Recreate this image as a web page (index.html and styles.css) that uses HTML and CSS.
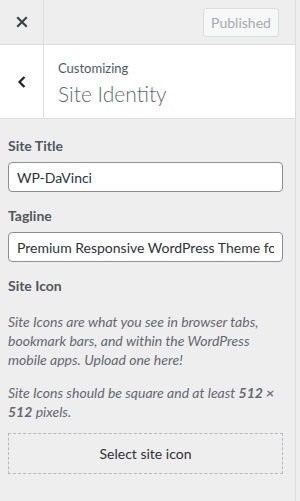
FILE: index.html
```html
<!DOCTYPE html>
<html lang="en">
<head>
  <meta charset="UTF-8">
  <title>Customizing: Site Identity</title>
  <link rel="stylesheet" href="styles.css">
</head>
<body>

  <div class="sidebar">
    <div class="topbar">
      <button class="close-btn" aria-label="Close">
        <svg width="12" height="12" viewBox="0 0 12 12"><path d="M2 2 L10 10 M10 2 L2 10" stroke="#3c434a" stroke-width="2.2" stroke-linecap="square"/></svg>
      </button>
      <button class="publish-btn" disabled>Published</button>
    </div>

    <div class="section-head">
      <button class="back-btn" aria-label="Back">
        <svg width="10" height="14" viewBox="0 0 10 14"><path d="M7.5 2 L2.5 7 L7.5 12" fill="none" stroke="#1d2327" stroke-width="2.2"/></svg>
      </button>
      <div class="section-title">
        <span class="crumb">Customizing</span>
        <h3>Site Identity</h3>
      </div>
    </div>

    <div class="controls">
      <div class="control">
        <label class="control-title" for="blogname">Site Title</label>
        <input id="blogname" class="text-input" type="text" value="WP-DaVinci">
      </div>

      <div class="control">
        <label class="control-title" for="blogdesc">Tagline</label>
        <input id="blogdesc" class="text-input" type="text" value="Premium Responsive WordPress Theme for Agencies">
      </div>

      <div class="control">
        <span class="control-title">Site Icon</span>
        <p class="desc">Site Icons are what you see in browser tabs, bookmark bars, and within the WordPress mobile apps. Upload one here!</p>
        <p class="desc">Site Icons should be square and at least <strong>512 &times; 512</strong> pixels.</p>
        <button class="upload-btn">Select site icon</button>
      </div>
    </div>
  </div>

</body>
</html>
```

FILE: styles.css
```css
html, body { height: 100%; }
body { margin: 0; background: #eee; font-family: Lato, "Noto Sans", sans-serif; font-size: 14px; color: #50575e; overflow: hidden; }
button { font-family: inherit; }

.sidebar { width: 295px; height: 100%; border-right: 1px solid #dcdcde; background: #eee; }

.topbar { display: flex; align-items: center; height: 44px; border-bottom: 1px solid #dcdcde; }
.close-btn { width: 44px; height: 44px; border: 0; border-right: 1px solid #dcdcde; background: transparent; display: flex; align-items: center; justify-content: center; padding: 0; }
.publish-btn { margin: 0 16px 0 auto; width: 76px; height: 29px; border: 1px solid #dcdcde; border-radius: 3px; background: #f6f7f7; color: #a7aaad; font-size: 14px; padding: 0; }

.section-head { display: flex; height: 73px; background: #fff; border-bottom: 1px solid #dcdcde; }
.back-btn { width: 44px; border: 0; border-right: 1px solid #dcdcde; background: transparent; display: flex; align-items: center; justify-content: center; padding: 0; }
.section-title { padding: 14px 0 0 14px; }
.crumb { display: block; font-size: 13px; line-height: 18px; color: #50575e; }
.section-title h3 { margin: 3px 0 0; font-size: 21px; font-weight: 300; line-height: 28px; color: #646970; }

.controls { padding: 16px 12px 0 8px; }
.control { margin-bottom: 13px; }
.control-title { display: block; font-size: 14px; font-weight: 700; line-height: 21px; color: #50575e; margin-bottom: 6px; }
.text-input { box-sizing: border-box; width: 100%; height: 30px; padding: 0 8px; border: 1px solid #8c8f94; border-radius: 4px; background: #fff; font-family: inherit; font-size: 14px; color: #2c3338; }

.desc { margin: 0 0 14px; font-style: italic; line-height: 19px; color: #646970; }
.desc:first-of-type { margin-top: 16px; }
.desc strong { font-weight: 700; }
.desc + .upload-btn { margin-top: -2px; }

.upload-btn { display: block; width: 100%; height: 41px; border: 1px dashed #b4b9be; background: transparent; font-size: 14px; color: #2c3338; }
```
